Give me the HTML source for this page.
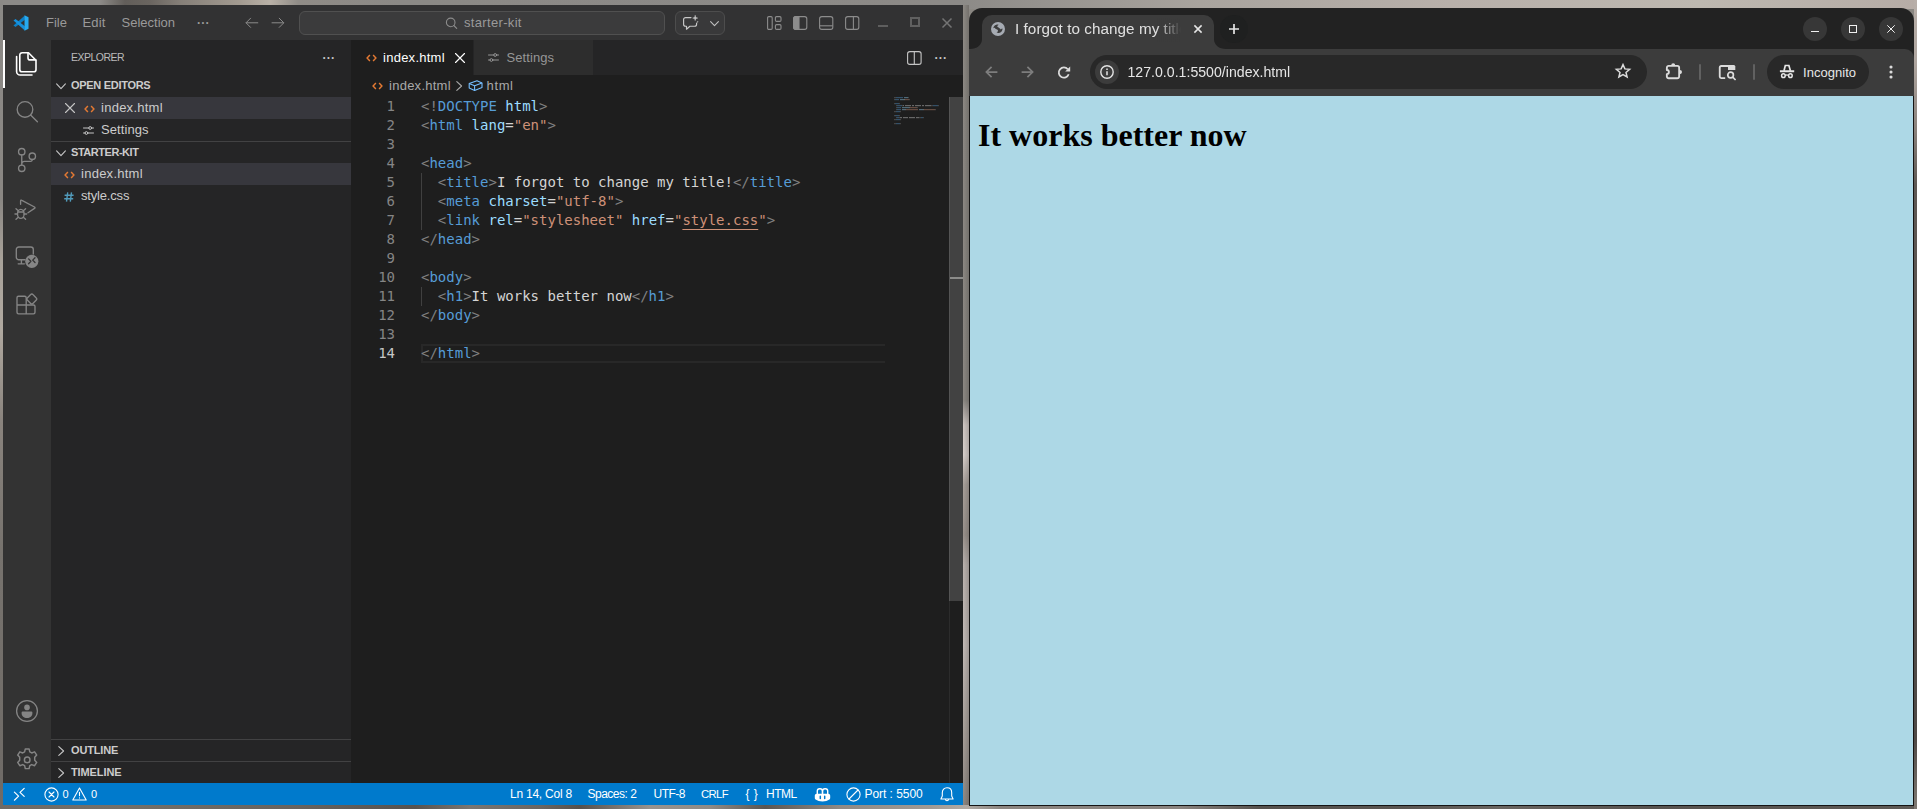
<!DOCTYPE html>
<html lang="en">
<head>
<meta charset="utf-8">
<title>Desktop</title>
<style>
*{box-sizing:border-box;margin:0;padding:0}
html,body{width:1917px;height:809px;overflow:hidden}
body{position:relative;font-family:"Liberation Sans",sans-serif;background:#8a8782;-webkit-font-smoothing:antialiased}
.abs{position:absolute}
.t{position:absolute;white-space:pre;line-height:1}
svg{position:absolute;overflow:visible}
/* wallpaper */
#wp-top{left:0;top:0;width:1917px;height:9px;background:linear-gradient(90deg,#8c8a87 0,#8c8a87 100px,#625e5a 125px,#6a6560 150px,#857f78 180px,#a39b91 240px,#b9b1a7 270px,#908c87 298px,#8b8986 400px,#8c8a87 960px,#a9a49e 1200px,#b8b0aa 1450px,#bdb8b0 1700px,#b6aca6 1917px)}
#wp-left{left:0;top:0;width:3px;height:809px;background:linear-gradient(180deg,#8b8986 0,#8a8783 200px,#a8a29a 260px,#b0a9a0 330px,#8a847e 420px,#77736e 550px,#6e6a66 809px)}
#wp-gap{left:963px;top:5px;width:6px;height:800px;background:linear-gradient(90deg,rgba(0,0,0,0),rgba(0,0,0,.18)),linear-gradient(180deg,#8d8984 0,#8b8782 395px,#cfc7c3 420px,#d8d0cc 450px,#a8a09a 480px,#9a928c 530px,#bab2ae 560px,#c2bab6 640px,#aaa29c 720px,#8c857f 809px)}
#wp-bot{left:0;top:805px;width:1917px;height:4px;background:linear-gradient(90deg,#6e6a66 0,#747069 120px,#67635f 300px,#57534f 415px,#7a7672 470px,#6a6662 540px,#55514d 580px,#98938e 650px,#908b86 710px,#5a5652 765px,#8f8a85 840px,#a09a94 930px,#b0aaa4 966px,#8c8681 1000px,#8a8480 1180px,#56524e 1260px,#5a5652 1400px,#6a6662 1500px,#585450 1650px,#5e5a56 1917px)}
#wp-right{left:1914px;top:0;width:3px;height:809px;background:linear-gradient(180deg,#b8afa9 0,#b0a7a1 60px,#8a827c 130px,#5e5854 185px,#544e4b 450px,#4e4946 740px,#7a756f 800px,#7d7872 809px)}

/* ===== VS Code ===== */
#vs{left:3px;top:5px;width:960px;height:800px;background:#1e1e1e;overflow:hidden;font-size:13px;color:#cccccc}
#vs .titlebar{left:0;top:0;width:960px;height:35px;background:#323233}
#vs .activity{left:0;top:35px;width:48px;height:743px;background:#333333}
#vs .sidebar{left:48px;top:35px;width:300px;height:743px;background:#252526}
#vs .editor{left:348px;top:35px;width:612px;height:743px;background:#1e1e1e}
#vs .status{left:0;top:778px;width:960px;height:22px;background:#007acc;color:#fff;font-size:12px}
.row-sel{position:absolute;left:0;width:300px;height:22px;background:#37373d}
.hdr{font-size:11px;font-weight:bold;color:#cccccc}
.code{font-family:"DejaVu Sans Mono","Liberation Mono",monospace;font-size:14px;line-height:19px;white-space:pre;position:absolute;color:#d4d4d4}
.ln{font-family:"DejaVu Sans Mono","Liberation Mono",monospace;font-size:14px;line-height:19px;position:absolute;color:#858585;text-align:right;width:40px}
.p{color:#808080}.k{color:#569cd6}.a{color:#9cdcfe}.s{color:#ce9178}

/* ===== Chrome ===== */
#ch{left:969px;top:8px;width:945px;height:798px;background:#222222;border-radius:13px 13px 0 0;overflow:hidden}
#ch .toolbar{left:0;top:41px;width:945px;height:47px;background:#3c3c3c;border-radius:0 9px 0 0}
#ch .page{left:1px;top:88px;width:943px;height:709px;background:#add8e6}
#ch .edge{left:0;top:88px;width:945px;height:710px;border:1px solid #141414;border-top:none}
</style>
</head>
<body>
<div id="wp-top" class="abs"></div>
<div id="wp-left" class="abs"></div>
<div id="wp-gap" class="abs"></div>
<div id="wp-bot" class="abs"></div>
<div id="wp-right" class="abs"></div>

<!-- ================= VS CODE ================= -->
<div id="vs" class="abs">
  <div class="titlebar abs" id="tb">
    <!-- logo -->
    <svg style="left:10px;top:10px" width="16" height="16" viewBox="0 0 100 100">
      <path d="M74 3L74 29L16 75L3 66Z" fill="#0c7fc6"/>
      <path d="M74 97L74 71L16 25L3 34Z" fill="#1690dc"/>
      <path d="M72 2L97 14V86L72 98Z" fill="#27aaf0"/>
    </svg>
    <span class="t" style="left:43px;top:11px;color:#9a9a9a">File</span>
    <span class="t" style="left:79.5px;top:11px;color:#9a9a9a;letter-spacing:.15px">Edit</span>
    <span class="t" style="left:118.5px;top:11px;color:#9a9a9a">Selection</span>
    <span class="t" style="left:194px;top:12px;color:#9a9a9a;font-weight:bold;letter-spacing:.2px;font-size:12px">···</span>
    <!-- nav arrows -->
    <svg style="left:242px;top:11px" width="14" height="14" viewBox="0 0 14 14" fill="none" stroke="#8a8a8a" stroke-width="1" stroke-linecap="round" stroke-linejoin="round"><path d="M12.800 6.800H1.200M5.600 2.200L1 6.800l4.600 4.600"/></svg>
    <svg style="left:268px;top:11px" width="14" height="14" viewBox="0 0 14 14" fill="none" stroke="#8a8a8a" stroke-width="1" stroke-linecap="round" stroke-linejoin="round"><path d="M1 6.800h11.600M8.200 2.200l4.600 4.600-4.600 4.600"/></svg>
    <!-- command center -->
    <div class="abs" style="left:296px;top:6px;width:366px;height:24px;background:#3b3b3c;border:1px solid #505050;border-radius:6px"></div>
    <svg style="left:442px;top:12px" width="12" height="12" viewBox="0 0 12 12" fill="none" stroke="#8c8c8c" stroke-width="1.1" stroke-linecap="round"><circle cx="5.700" cy="5.400" r="4.300"/><path d="M8.800 8.500l2.900 2.900"/></svg>
    <span class="t" style="left:461px;top:11px;color:#9a9a9a;letter-spacing:.33px">starter-kit</span>
    <!-- copilot button -->
    <div class="abs" style="left:672px;top:6px;width:50px;height:24px;background:#39393a;border:1px solid #4d4d4d;border-radius:6px"></div>
    <svg style="left:679px;top:10px" width="17" height="16" viewBox="0 0 17 16" fill="none" stroke="#c8c8c8" stroke-width="1.15" stroke-linecap="round" stroke-linejoin="round"><path d="M9 2.6H3.6a2 2 0 0 0-2 2v4.6a2 2 0 0 0 2 2h.9v3l3.4-3h4.7a2 2 0 0 0 2-2V8"/><path d="M13.2.6c.2 1.6.9 2.3 2.5 2.5-1.600.2-2.300.9-2.500 2.500-.2-1.600-.9-2.300-2.500-2.500 1.600-.2 2.300-.9 2.500-2.500z" fill="#c8c8c8" stroke-width=".5"/><path d="M15.700 5.800c.1.700.400 1 1.100 1.100-.7.100-1 .4-1.100 1.100-.1-.7-.4-1-1.100-1.100.7-.1 1-.4 1.100-1.100z" fill="#c8c8c8" stroke="none"/></svg>
    <svg style="left:707px;top:16px" width="9" height="6" viewBox="0 0 9 6" fill="none" stroke="#c0c0c0" stroke-width="1.100" stroke-linecap="round" stroke-linejoin="round"><path d="M.6.600l3.900 4 3.900-4"/></svg>
    <!-- layout icons -->
    <svg style="left:764px;top:11px" width="15" height="14" viewBox="0 0 15 14" fill="none" stroke="#8c8c8c" stroke-width="1.1"><rect x=".6" y=".6" width="4.600" height="12.800" rx="1.200"/><rect x="8.400" y=".6" width="5.600" height="4.800" rx="1.200"/><rect x="8.400" y="8.600" width="5.600" height="4.800" rx="1.200"/></svg>
    <svg style="left:789.500px;top:11px" width="15" height="14" viewBox="0 0 15 14" fill="none" stroke="#8c8c8c" stroke-width="1.1"><rect x=".6" y=".6" width="13.200" height="12.800" rx="2.200"/><path d="M.6 2.800a2.200 2.200 0 0 1 2.200-2.200H6v12.800H2.800a2.200 2.200 0 0 1-2.200-2.200z" fill="#8c8c8c"/></svg>
    <svg style="left:815.500px;top:11px" width="15" height="14" viewBox="0 0 15 14" fill="none" stroke="#8c8c8c" stroke-width="1.1"><rect x=".6" y=".6" width="13.200" height="12.800" rx="2.200"/><path d="M.6 9.800h13.200"/></svg>
    <svg style="left:841.500px;top:11px" width="15" height="14" viewBox="0 0 15 14" fill="none" stroke="#8c8c8c" stroke-width="1.1"><rect x=".6" y=".6" width="13.200" height="12.800" rx="2.200"/><path d="M8.400.6v12.800"/></svg>
    <!-- window controls -->
    <div class="abs" style="left:874.500px;top:20px;width:10px;height:2px;background:#5e5e5e"></div>
    <div class="abs" style="left:906.500px;top:12px;width:10px;height:10px;border:2px solid #606060"></div>
    <svg style="left:938.500px;top:12.500px" width="10" height="10" viewBox="0 0 10 10" fill="none" stroke="#747474" stroke-width="1.500"><path d="M.5.5l9 9M9.500.5l-9 9"/></svg>
  </div>
  <div class="activity abs" id="ab">
    <div class="abs" style="left:0;top:0;width:2px;height:48px;background:#ffffff"></div>
    <!-- explorer (files) : abs x15.8-36.8, y51.9-75.8 => rel-to-activity x12.8-33.8, y11.9-35.8 -->
    <svg style="left:12px;top:11px" width="24" height="26" viewBox="0 0 24 26" fill="none" stroke="#ffffff" stroke-width="1.600" stroke-linejoin="round" stroke-linecap="round">
      <path d="M7.200 1.700h6.300l7.500 7.500v9.200a2.400 2.400 0 0 1-2.400 2.400H7.200a2.400 2.400 0 0 1-2.400-2.400V4.100a2.400 2.400 0 0 1 2.400-2.400z"/>
      <path d="M13 2v4.900a2 2 0 0 0 2 2h5.700"/>
      <path d="M1.600 5.500v14.900a3.600 3.600 0 0 0 3.600 3.600H17"/>
    </svg>
    <!-- search centre (25,109.4) abs => rel (22, 69.4) -->
    <svg style="left:12px;top:59px" width="24" height="24" viewBox="0 0 24 24" fill="none" stroke="#858585" stroke-width="1.350" stroke-linecap="round"><circle cx="10" cy="10.400" r="7.800"/><path d="M15.600 16l6.800 6.800"/></svg>
    <!-- source control centre y abs 159.4 => rel 119.4 -->
    <svg style="left:12px;top:107px" width="24" height="28" viewBox="0 0 24 28" fill="none" stroke="#858585" stroke-width="1.350" stroke-linecap="round"><circle cx="6.750" cy="4.700" r="3.200"/><circle cx="6.750" cy="21.300" r="3.200"/><circle cx="17.300" cy="9.200" r="3.200"/><path d="M6.750 7.900V18.100M17.300 12.400v.3a1.600 1.600 0 0 1-1.600 1.600H9.400a2.600 2.600 0 0 0-2.600 2.600"/></svg>
    <!-- run and debug centre abs 208.7 => rel 168.7 -->
    <svg style="left:12px;top:156px" width="26" height="26" viewBox="0 0 26 26" fill="none" stroke="#858585" stroke-width="1.350" stroke-linecap="round" stroke-linejoin="round"><path d="M5.600 8.200V5c0-.8.600-1.100 1.300-.7l12.600 6.700c.7.400.7 1 0 1.400L13 16.800"/><ellipse cx="5.800" cy="17.900" rx="3.300" ry="4.500"/><path d="M3 14.600L1 12.800M8.600 14.600l2-1.800M2.500 18H0M9.100 18h2.500M3 21.400l-2 1.800M8.600 21.400l2 1.800M2.900 16h5.800"/></svg>
    <!-- remote explorer centre abs 257 => rel 217 -->
    <svg style="left:11px;top:204px" width="28" height="28" viewBox="0 0 28 28" fill="none" stroke="#858585" stroke-width="1.350" stroke-linecap="round" stroke-linejoin="round"><path d="M11 15.700H4.800a2.500 2.500 0 0 1-2.500-2.500V5.500A2.500 2.500 0 0 1 4.800 3h12a2.500 2.500 0 0 1 2.500 2.500V10"/><path d="M4.200 19.800h6.200M7.400 15.900v3.700"/><circle cx="17.800" cy="17.300" r="6.600" fill="#858585" stroke="none"/><path d="M14.600 14.900l2.300 2.400-2.300 2.400M21 13.700l-2.300 2.400 2.300 2.400" stroke="#333333" stroke-width="1.300"/></svg>
    <!-- extensions centre abs 304 => rel 264 -->
    <svg style="left:12px;top:252px" width="25" height="24" viewBox="0 0 25 24" fill="none" stroke="#858585" stroke-width="1.350" stroke-linejoin="round"><path d="M11.200 13V5.700a1.500 1.500 0 0 0-1.500-1.500H3.500A1.500 1.500 0 0 0 2 5.700v14.600a1.500 1.500 0 0 0 1.500 1.500h15a1.500 1.500 0 0 0 1.500-1.500v-5.800a1.500 1.500 0 0 0-1.500-1.500H2M11.200 13v8.800"/><path d="M15.700 2.500a1.500 1.500 0 0 1 2.200 0l3.400 3.400a1.500 1.500 0 0 1 0 2.200l-3.400 3.400a1.500 1.500 0 0 1-2.200 0l-3.400-3.400a1.500 1.500 0 0 1 0-2.200z"/></svg>
    <!-- account centre abs (27.1,711) => rel (24.1,671) -->
    <svg style="left:12px;top:659px" width="24" height="24" viewBox="0 0 24 24" fill="none" stroke="#858585" stroke-width="1.300"><circle cx="12" cy="12" r="10.400"/><circle cx="12" cy="8.400" r="2.800" fill="#858585" stroke="none"/><path d="M7.600 12.600h8.800a1 1 0 0 1 1 1v.6c0 2.900-2.400 4.800-5.400 4.800s-5.400-1.900-5.400-4.800v-.6a1 1 0 0 1 1-1z" fill="#858585" stroke="none"/></svg>
    <!-- gear centre abs (27,758.9) => rel (24,718.9) -->
    <svg style="left:12px;top:707px" width="24" height="26" viewBox="0 0 24 26" fill="none" stroke="#858585" stroke-width="1.300" stroke-linejoin="round"><g transform="translate(12.200 12.900) scale(1.120) translate(-12 -12)"><circle cx="12" cy="12" r="2.500"/><path d="M10.300 2.200h3.400l.6 2.700 1.700.9 2.600-1 1.900 2.900-1.800 2v2.600l1.800 2-1.900 2.900-2.600-1-1.700.9-.6 2.700h-3.400l-.6-2.700-1.700-.9-2.600 1-1.900-2.900 1.800-2v-2.600l-1.800-2 1.900-2.900 2.600 1 1.700-.9z"/></g></svg>
  </div>
  <div class="sidebar abs" id="sb">
    <span class="t" style="left:20px;top:12px;font-size:10.500px;color:#bbbbbb;letter-spacing:-.52px">EXPLORER</span>
    <span class="t" style="left:271.500px;top:11.500px;color:#c5c5c5;font-weight:bold;letter-spacing:.2px;font-size:12px">···</span>
    <!-- OPEN EDITORS -->
    <svg style="left:5px;top:43px" width="10" height="7" viewBox="0 0 10 7" fill="none" stroke="#c5c5c5" stroke-width="1.100" stroke-linecap="round" stroke-linejoin="round"><path d="M.6.800L5 5.600 9.400.8"/></svg>
    <span class="t hdr" style="left:20px;top:39.500px;letter-spacing:-.3px">OPEN EDITORS</span>
    <div class="row-sel" style="top:57px"></div>
    <svg style="left:13.500px;top:63px" width="10" height="10" viewBox="0 0 10 10" fill="none" stroke="#c5c5c5" stroke-width="1.100" stroke-linecap="round"><path d="M.5.500l9 9M9.500.5l-9 9"/></svg>
    <svg style="left:32.500px;top:64.500px" width="11" height="8" viewBox="0 0 11 8" fill="none" stroke="#e37933" stroke-width="1.450"><path d="M3.900 1.100L1.100 4l2.800 2.900M7.100 1.100L9.900 4 7.100 6.900"/></svg>
    <span class="t" style="left:50px;top:61px;color:#cccccc;letter-spacing:.26px">index.html</span>
    <svg style="left:32px;top:86px" width="11" height="9" viewBox="0 0 11 9" fill="none" stroke="#c5c5c5" stroke-width="1" stroke-linecap="round"><path d="M.5 2h5.300M8.700 2h1.800M.5 7H2M4.900 7h5.600"/><circle cx="7.200" cy="2" r="1.400"/><circle cx="3.400" cy="7" r="1.400"/></svg>
    <span class="t" style="left:50px;top:83px;color:#cccccc;letter-spacing:.09px">Settings</span>
    <!-- STARTER-KIT -->
    <div class="abs" style="left:0;top:101px;width:300px;height:1px;background:#424243"></div>
    <svg style="left:5px;top:110px" width="10" height="7" viewBox="0 0 10 7" fill="none" stroke="#c5c5c5" stroke-width="1.100" stroke-linecap="round" stroke-linejoin="round"><path d="M.6.800L5 5.600 9.400.8"/></svg>
    <span class="t hdr" style="left:20px;top:106.500px;letter-spacing:-.46px">STARTER-KIT</span>
    <div class="row-sel" style="top:123px"></div>
    <svg style="left:12.500px;top:130.500px" width="11" height="8" viewBox="0 0 11 8" fill="none" stroke="#e37933" stroke-width="1.450"><path d="M3.900 1.100L1.100 4l2.800 2.900M7.100 1.100L9.900 4 7.100 6.900"/></svg>
    <span class="t" style="left:30px;top:127px;color:#cccccc;letter-spacing:.26px">index.html</span>
    <svg style="left:13px;top:151.500px" width="10" height="10" viewBox="0 0 10 10" fill="none" stroke="#519aba" stroke-width="1.400"><path d="M3.700.3L2.500 9.700M7.500.3L6.300 9.700M.6 3.300h9M.2 6.700h9"/></svg>
    <span class="t" style="left:30px;top:149px;color:#cccccc;letter-spacing:-.18px">style.css</span>
    <!-- OUTLINE / TIMELINE -->
    <div class="abs" style="left:0;top:699px;width:300px;height:1px;background:#424243"></div>
    <svg style="left:7px;top:706px" width="7" height="10" viewBox="0 0 7 10" fill="none" stroke="#c5c5c5" stroke-width="1.100" stroke-linecap="round" stroke-linejoin="round"><path d="M.8.600L5.600 5 .8 9.400"/></svg>
    <span class="t hdr" style="left:20px;top:704.500px;letter-spacing:-.17px">OUTLINE</span>
    <div class="abs" style="left:0;top:721px;width:300px;height:1px;background:#424243"></div>
    <svg style="left:7px;top:728px" width="7" height="10" viewBox="0 0 7 10" fill="none" stroke="#c5c5c5" stroke-width="1.100" stroke-linecap="round" stroke-linejoin="round"><path d="M.8.600L5.600 5 .8 9.400"/></svg>
    <span class="t hdr" style="left:20px;top:726.500px;letter-spacing:-.11px">TIMELINE</span>
  </div>
  <div class="editor abs" id="ed">
    <div class="abs" style="left:0;top:0;width:612px;height:35px;background:#252526"></div>
    <div class="abs" style="left:0;top:0;width:122px;height:35px;background:#1e1e1e"></div>
    <div class="abs" style="left:123px;top:0;width:119px;height:35px;background:#2d2d2d"></div>
    <svg style="left:15px;top:14px" width="11" height="8" viewBox="0 0 11 8" fill="none" stroke="#e37933" stroke-width="1.450"><path d="M3.900 1.100L1.100 4l2.800 2.900M7.100 1.100L9.900 4 7.100 6.900"/></svg>
    <span class="t" style="left:32px;top:11px;color:#ffffff;letter-spacing:.26px">index.html</span>
    <svg style="left:103.500px;top:13px" width="10" height="10" viewBox="0 0 10 10" fill="none" stroke="#ffffff" stroke-width="1.150" stroke-linecap="round"><path d="M.5.500l9 9M9.500.5l-9 9"/></svg>
    <svg style="left:137px;top:13px" width="11" height="9" viewBox="0 0 11 9" fill="none" stroke="#969696" stroke-width="1" stroke-linecap="round"><path d="M.5 2h5.300M8.700 2h1.800M.5 7H2M4.900 7h5.600"/><circle cx="7.200" cy="2" r="1.400"/><circle cx="3.400" cy="7" r="1.400"/></svg>
    <span class="t" style="left:155.500px;top:11px;color:#969696;letter-spacing:.09px">Settings</span>
    <svg style="left:556px;top:10.500px" width="15" height="14" viewBox="0 0 15 14" fill="none" stroke="#c5c5c5" stroke-width="1.100"><rect x=".6" y=".6" width="13.500" height="12.800" rx="2.200"/><path d="M7.300.6v12.800"/></svg>
    <span class="t" style="left:583.500px;top:12px;color:#c5c5c5;font-weight:bold;letter-spacing:.2px;font-size:12px">···</span>
    <svg style="left:21px;top:42px" width="11" height="8" viewBox="0 0 11 8" fill="none" stroke="#e37933" stroke-width="1.450"><path d="M3.900 1.100L1.100 4l2.800 2.900M7.100 1.100L9.900 4 7.100 6.900"/></svg>
    <span class="t" style="left:38px;top:38.500px;color:#a9a9a9;letter-spacing:.26px">index.html</span>
    <svg style="left:105px;top:41px" width="7" height="10" viewBox="0 0 7 10" fill="none" stroke="#a9a9a9" stroke-width="1.100" stroke-linecap="round" stroke-linejoin="round"><path d="M.8.600L5.600 5 .8 9.400"/></svg>
    <svg style="left:116.500px;top:40px" width="15" height="11" viewBox="0 0 15 11" fill="none" stroke="#75beff" stroke-width="1.100" stroke-linejoin="round"><path d="M1.200 3.600L9 .8l5 2.200v4.600L6.600 10.400 1.200 8z"/><path d="M1.200 3.600l5.400 2.200L14 3M6.600 5.800v4.600"/></svg>
    <span class="t" style="left:135.500px;top:38.500px;color:#a9a9a9;letter-spacing:.65px">html</span>
    <div class="abs" style="left:70px;top:304px;width:464px;height:19px;border:2px solid #282828;border-right:none"></div>
    <div class="abs" style="left:70px;top:133px;width:1px;height:57px;background:#404040"></div>
    <div class="abs" style="left:70px;top:247px;width:1px;height:19px;background:#404040"></div>
    <div class="ln" style="left:4px;top:57px;color:#858585">1</div>
    <div class="code" style="left:70px;top:57px"><span class="p">&lt;!</span><span class="k">DOCTYPE</span> <span class="a">html</span><span class="p">&gt;</span></div>
    <div class="ln" style="left:4px;top:76px;color:#858585">2</div>
    <div class="code" style="left:70px;top:76px"><span class="p">&lt;</span><span class="k">html</span> <span class="a">lang</span>=<span class="s">"en"</span><span class="p">&gt;</span></div>
    <div class="ln" style="left:4px;top:95px;color:#858585">3</div>
    <div class="ln" style="left:4px;top:114px;color:#858585">4</div>
    <div class="code" style="left:70px;top:114px"><span class="p">&lt;</span><span class="k">head</span><span class="p">&gt;</span></div>
    <div class="ln" style="left:4px;top:133px;color:#858585">5</div>
    <div class="code" style="left:70px;top:133px">  <span class="p">&lt;</span><span class="k">title</span><span class="p">&gt;</span>I forgot to change my title!<span class="p">&lt;/</span><span class="k">title</span><span class="p">&gt;</span></div>
    <div class="ln" style="left:4px;top:152px;color:#858585">6</div>
    <div class="code" style="left:70px;top:152px">  <span class="p">&lt;</span><span class="k">meta</span> <span class="a">charset</span>=<span class="s">"utf-8"</span><span class="p">&gt;</span></div>
    <div class="ln" style="left:4px;top:171px;color:#858585">7</div>
    <div class="code" style="left:70px;top:171px">  <span class="p">&lt;</span><span class="k">link</span> <span class="a">rel</span>=<span class="s">"stylesheet"</span> <span class="a">href</span>=<span class="s">"</span><span class="s" style="text-decoration:underline;text-underline-offset:4px">style.css</span><span class="s">"</span><span class="p">&gt;</span></div>
    <div class="ln" style="left:4px;top:190px;color:#858585">8</div>
    <div class="code" style="left:70px;top:190px"><span class="p">&lt;/</span><span class="k">head</span><span class="p">&gt;</span></div>
    <div class="ln" style="left:4px;top:209px;color:#858585">9</div>
    <div class="ln" style="left:4px;top:228px;color:#858585">10</div>
    <div class="code" style="left:70px;top:228px"><span class="p">&lt;</span><span class="k">body</span><span class="p">&gt;</span></div>
    <div class="ln" style="left:4px;top:247px;color:#858585">11</div>
    <div class="code" style="left:70px;top:247px">  <span class="p">&lt;</span><span class="k">h1</span><span class="p">&gt;</span>It works better now<span class="p">&lt;/</span><span class="k">h1</span><span class="p">&gt;</span></div>
    <div class="ln" style="left:4px;top:266px;color:#858585">12</div>
    <div class="code" style="left:70px;top:266px"><span class="p">&lt;/</span><span class="k">body</span><span class="p">&gt;</span></div>
    <div class="ln" style="left:4px;top:285px;color:#858585">13</div>
    <div class="ln" style="left:4px;top:304px;color:#c6c6c6">14</div>
    <div class="code" style="left:70px;top:304px"><span class="p">&lt;/</span><span class="k">html</span><span class="p">&gt;</span></div>
    <svg style="left:543px;top:57px" width="50" height="30" viewBox="0 0 50 30" opacity=".4"><rect x="0" y="0" width="2" height="1.200" fill="#808080"/><rect x="2" y="0" width="7" height="1.200" fill="#569cd6"/><rect x="10" y="0" width="4" height="1.200" fill="#9cdcfe"/><rect x="14" y="0" width="1" height="1.200" fill="#808080"/><rect x="0" y="2" width="1" height="1.200" fill="#808080"/><rect x="1" y="2" width="4" height="1.200" fill="#569cd6"/><rect x="6" y="2" width="4" height="1.200" fill="#9cdcfe"/><rect x="10" y="2" width="1" height="1.200" fill="#d4d4d4"/><rect x="11" y="2" width="4" height="1.200" fill="#ce9178"/><rect x="15" y="2" width="1" height="1.200" fill="#808080"/><rect x="0" y="6" width="1" height="1.200" fill="#808080"/><rect x="1" y="6" width="4" height="1.200" fill="#569cd6"/><rect x="5" y="6" width="1" height="1.200" fill="#808080"/><rect x="2" y="8" width="1" height="1.200" fill="#808080"/><rect x="3" y="8" width="5" height="1.200" fill="#569cd6"/><rect x="8" y="8" width="1" height="1.200" fill="#808080"/><rect x="9" y="8" width="1" height="1.200" fill="#d4d4d4"/><rect x="11" y="8" width="6" height="1.200" fill="#d4d4d4"/><rect x="18" y="8" width="2" height="1.200" fill="#d4d4d4"/><rect x="21" y="8" width="6" height="1.200" fill="#d4d4d4"/><rect x="28" y="8" width="2" height="1.200" fill="#d4d4d4"/><rect x="31" y="8" width="6" height="1.200" fill="#d4d4d4"/><rect x="37" y="8" width="2" height="1.200" fill="#808080"/><rect x="39" y="8" width="5" height="1.200" fill="#569cd6"/><rect x="44" y="8" width="1" height="1.200" fill="#808080"/><rect x="2" y="10" width="1" height="1.200" fill="#808080"/><rect x="3" y="10" width="4" height="1.200" fill="#569cd6"/><rect x="8" y="10" width="7" height="1.200" fill="#9cdcfe"/><rect x="15" y="10" width="1" height="1.200" fill="#d4d4d4"/><rect x="16" y="10" width="7" height="1.200" fill="#ce9178"/><rect x="23" y="10" width="1" height="1.200" fill="#808080"/><rect x="2" y="12" width="1" height="1.200" fill="#808080"/><rect x="3" y="12" width="4" height="1.200" fill="#569cd6"/><rect x="8" y="12" width="3" height="1.200" fill="#9cdcfe"/><rect x="11" y="12" width="1" height="1.200" fill="#d4d4d4"/><rect x="12" y="12" width="12" height="1.200" fill="#ce9178"/><rect x="25" y="12" width="4" height="1.200" fill="#9cdcfe"/><rect x="29" y="12" width="1" height="1.200" fill="#d4d4d4"/><rect x="30" y="12" width="1" height="1.200" fill="#ce9178"/><rect x="31" y="12" width="9" height="1.200" fill="#ce9178"/><rect x="40" y="12" width="1" height="1.200" fill="#ce9178"/><rect x="41" y="12" width="1" height="1.200" fill="#808080"/><rect x="0" y="14" width="2" height="1.200" fill="#808080"/><rect x="2" y="14" width="4" height="1.200" fill="#569cd6"/><rect x="6" y="14" width="1" height="1.200" fill="#808080"/><rect x="0" y="18" width="1" height="1.200" fill="#808080"/><rect x="1" y="18" width="4" height="1.200" fill="#569cd6"/><rect x="5" y="18" width="1" height="1.200" fill="#808080"/><rect x="2" y="20" width="1" height="1.200" fill="#808080"/><rect x="3" y="20" width="2" height="1.200" fill="#569cd6"/><rect x="5" y="20" width="1" height="1.200" fill="#808080"/><rect x="6" y="20" width="2" height="1.200" fill="#d4d4d4"/><rect x="9" y="20" width="5" height="1.200" fill="#d4d4d4"/><rect x="15" y="20" width="6" height="1.200" fill="#d4d4d4"/><rect x="22" y="20" width="3" height="1.200" fill="#d4d4d4"/><rect x="25" y="20" width="2" height="1.200" fill="#808080"/><rect x="27" y="20" width="2" height="1.200" fill="#569cd6"/><rect x="29" y="20" width="1" height="1.200" fill="#808080"/><rect x="0" y="22" width="2" height="1.200" fill="#808080"/><rect x="2" y="22" width="4" height="1.200" fill="#569cd6"/><rect x="6" y="22" width="1" height="1.200" fill="#808080"/><rect x="0" y="26" width="2" height="1.200" fill="#808080"/><rect x="2" y="26" width="4" height="1.200" fill="#569cd6"/><rect x="6" y="26" width="1" height="1.200" fill="#808080"/></svg>
    <div class="abs" style="left:598px;top:57px;width:1px;height:686px;background:#2c2c2c"></div>
    <div class="abs" style="left:598px;top:57px;width:14px;height:504px;background:rgba(121,121,121,.4)"></div>
    <div class="abs" style="left:598px;top:57px;width:1px;height:504px;background:rgba(255,255,255,.06)"></div>
    <div class="abs" style="left:599px;top:237px;width:13px;height:2px;background:#8c8c8a"></div>
  </div>
  <div class="status abs" id="st">
    <svg style="left:10px;top:5px" width="12" height="13" viewBox="0 0 12 13" fill="none" stroke="#ffffff" stroke-width="1.200" stroke-linecap="round" stroke-linejoin="round"><path d="M1.400 4.100L5.600 8.100 1.400 12.200M11.200.4L7 4.400l4.200 4"/></svg>
    <svg style="left:40.500px;top:3.500px" width="15" height="15" viewBox="0 0 15 15" fill="none" stroke="#ffffff" stroke-width="1.100" stroke-linecap="round"><circle cx="7.500" cy="7.500" r="6.600"/><path d="M5 5l5 5M10 5l-5 5"/></svg>
    <span class="t" style="left:59.500px;top:5.500px;font-size:11px">0</span>
    <svg style="left:69px;top:4px" width="15" height="14" viewBox="0 0 15 14" fill="none" stroke="#ffffff" stroke-width="1.100" stroke-linecap="round" stroke-linejoin="round"><path d="M7.500 1L14.200 13H.8z"/><path d="M7.500 5.400v3.400M7.500 10.800v.2"/></svg>
    <span class="t" style="left:88px;top:5.500px;font-size:11px">0</span>
    <span class="t" style="left:507px;top:5px;letter-spacing:-.24px">Ln 14, Col 8</span>
    <span class="t" style="left:584.500px;top:5px;letter-spacing:-.5px">Spaces: 2</span>
    <span class="t" style="left:650.500px;top:5px;letter-spacing:-.54px">UTF-8</span>
    <span class="t" style="left:698px;top:5.500px;font-size:11.300px;letter-spacing:-.62px">CRLF</span>
    <span class="t" style="left:742.500px;top:4.500px;letter-spacing:.5px">{ }</span>
    <span class="t" style="left:763px;top:5px;letter-spacing:-.47px">HTML</span>
    <svg style="left:810.500px;top:3.500px" width="17" height="16" viewBox="0 0 17 16" fill="none" stroke="#ffffff" stroke-width="1.400" stroke-linejoin="round"><path d="M3.300 7V4.100a2.300 2.300 0 0 1 2.300-2.300h.5a2.300 2.300 0 0 1 2.300 2.300V7M8.600 7V4.100a2.300 2.300 0 0 1 2.300-2.300h.5a2.300 2.300 0 0 1 2.300 2.300V7"/><path d="M.8 8.600c0-1.100.8-1.900 1.900-1.900h11.600c1.100 0 1.900.8 1.900 1.900v2.300c0 .7-.3 1.200-.8 1.600-1.800 1.300-4.100 2-6.900 2s-5.100-.7-6.900-2c-.5-.4-.8-.9-.8-1.600z" fill="#ffffff" stroke="none"/><path d="M6.300 9.200v2.400M10.700 9.200v2.400" stroke="#007acc" stroke-width="1.500" stroke-linecap="round"/></svg>
    <svg style="left:843px;top:3.500px" width="15" height="15" viewBox="0 0 15 15" fill="none" stroke="#ffffff" stroke-width="1.100" stroke-linecap="round"><circle cx="7.500" cy="7.500" r="6.600"/><path d="M3 12L12 3"/></svg>
    <span class="t" style="left:861.500px;top:5px;letter-spacing:-.05px">Port : 5500</span>
    <svg style="left:937px;top:3.500px" width="14" height="15" viewBox="0 0 14 15" fill="none" stroke="#ffffff" stroke-width="1.100" stroke-linejoin="round"><path d="M7 .8c2.800 0 4.700 2.100 4.700 4.900v3.400l1.400 2.900H.9l1.400-2.900V5.700C2.300 2.900 4.200.8 7 .8z"/><path d="M5.300 12.200c.2 1 .8 1.500 1.700 1.500s1.500-.5 1.700-1.500"/></svg>
  </div>
</div>

<!-- ================= CHROME ================= -->
<div id="ch" class="abs">
  <div class="abs" id="tabstrip" style="left:0;top:0;width:945px;height:41px">
    <!-- active tab shape -->
    <svg style="left:0;top:0" width="270" height="41" viewBox="0 0 270 41"><path d="M1 41C8 41 13 37 13 31V17A10 10 0 0 1 23 7H235a10 10 0 0 1 10 10v14c0 6 5 10 12 10z" fill="#3c3c3c"/></svg>
    <!-- favicon globe -->
    <svg style="left:22px;top:14px" width="14" height="14" viewBox="0 0 14 14"><circle cx="7" cy="7" r="7" fill="#a6abb3"/><path d="M5.300 2.800c.9-.5 1.900-.4 2.300.1-.9.300-1.500.9-1.300 1.700.2.800 1.200.9 1.900 1.300.8.400 1.200 1 1.600 1.700.5-.5 1-.9 1.700-1 .1.900-.3 2-.9 2.800-.7.900-1.700 1.400-2.700 1.500-.9.100-1.800-.2-2.300-.7.700-.2 1.400-.6 1.400-1.400 0-.8-.8-1.100-1.500-1.500-.8-.4-1.400-.9-1.800-1.600-.4-.1-.9.200-1.300.6-.1-1.300.900-2.900 2.900-3.500z" fill="#3c3c3c"/></svg>
    <div class="abs" style="left:45px;top:10px;width:169px;height:24px;overflow:hidden">
      <span class="t" style="left:.5px;top:3.200px;font-size:15.250px;color:#e0e0e0;letter-spacing:.05px;will-change:transform">I forgot to change my title!</span>
      <div class="abs" style="left:143px;top:0;width:26px;height:24px;background:linear-gradient(90deg,rgba(60,60,60,0),#3c3c3c 92%)"></div>
    </div>
    <svg style="left:225px;top:17px" width="8" height="8" viewBox="0 0 8 8" fill="none" stroke="#e6e6e6" stroke-width="1.500"><path d="M.4.400l7.200 7.200M7.600.4L.4 7.600"/></svg>
    <!-- new tab -->
    <div class="abs" style="left:251px;top:7px;width:28px;height:28px;border-radius:14px;background:#1f2020"></div>
    <svg style="left:260px;top:15.500px" width="10" height="10" viewBox="0 0 10 10" fill="none" stroke="#e6e6e6" stroke-width="1.700"><path d="M5 0v10M0 5h10"/></svg>
    <!-- window buttons -->
    <div class="abs" style="left:834px;top:9px;width:24px;height:24px;border-radius:12px;background:#373737"></div>
    <div class="abs" style="left:872px;top:9px;width:24px;height:24px;border-radius:12px;background:#373737"></div>
    <div class="abs" style="left:910px;top:9px;width:24px;height:24px;border-radius:12px;background:#373737"></div>
    <div class="abs" style="left:842px;top:23px;width:8px;height:1px;background:#f0f0f0"></div>
    <div class="abs" style="left:880px;top:17px;width:8px;height:8px;border:1px solid #f0f0f0"></div>
    <svg style="left:918px;top:17px" width="8" height="8" viewBox="0 0 8 8" fill="none" stroke="#f0f0f0" stroke-width="1"><path d="M.3.300l7.400 7.400M7.700.3L.3 7.700"/></svg>
  </div>
  <div class="toolbar abs" id="tool">
    <!-- toolbar coords relative to toolbar: abs y-49, abs x-969 -->
    <svg style="left:16.200px;top:17px" width="13" height="12" viewBox="0 0 13 12" fill="none" stroke="#7d7d7d" stroke-width="1.750" stroke-linejoin="miter"><path d="M12.400 6H1.600M6.600 .8L1.400 6l5.200 5.200"/></svg>
    <svg style="left:51.800px;top:17px" width="13" height="12" viewBox="0 0 13 12" fill="none" stroke="#7d7d7d" stroke-width="1.750"><path d="M.6 6h10.800M6.400.8L11.600 6l-5.200 5.200"/></svg>
    <svg style="left:88px;top:16.500px" width="14" height="13" viewBox="0 0 14 13" fill="none" stroke="#dcdcdc" stroke-width="1.750"><path d="M11.700 8.300A5.100 5.100 0 1 1 10.800 3.300"/><path d="M13.200.4V5.400H8.200z" fill="#dcdcdc" stroke="none"/></svg>
    <!-- omnibox -->
    <div class="abs" style="left:121px;top:6px;width:557px;height:34px;border-radius:17px;background:#282828"></div>
    <div class="abs" style="left:125.500px;top:11px;width:24px;height:24px;border-radius:12px;background:#3c3c3c"></div>
    <svg style="left:130.500px;top:16px" width="14" height="14" viewBox="0 0 14 14" fill="none" stroke="#e3e3e3" stroke-width="1.400"><circle cx="7" cy="7" r="6.200"/><path d="M7 6.200v4M7 3.600v1.500" stroke-width="1.500"/></svg>
    <span class="t" style="left:158.500px;top:16px;font-size:14.100px;color:#e6e6e6;letter-spacing:.02px">127.0.0.1:5500/index.html</span>
    <svg style="left:646px;top:14.300px" width="16" height="15" viewBox="0 0 16 15" fill="none" stroke="#dcdcdc" stroke-width="1.500" stroke-linejoin="miter"><path d="M8 1.600l1.900 4.300 4.700.4-3.600 3.100 1.100 4.600L8 11.600 3.900 14 5 9.400 1.400 6.300l4.700-.4z"/></svg>
    <!-- extensions -->
    <svg style="left:696px;top:13px" width="18" height="18" viewBox="0 0 18 18" fill="none" stroke="#dcdcdc" stroke-width="1.850" stroke-linejoin="round"><path d="M3.650 3.850H12.350a1.800 1.800 0 0 1 1.800 1.800V14.450a1.800 1.800 0 0 1-1.800 1.800H3.650a1.800 1.800 0 0 1-1.800-1.800V12.100a2.050 2.050 0 0 0 0-4.100V5.650a1.800 1.800 0 0 1 1.800-1.800z"/><path d="M6.200 3.200a2 2 0 0 1 4 0zM14.900 8a2.100 2.100 0 0 1 0 4.200z" fill="#dcdcdc" stroke="none"/></svg>
    <div class="abs" style="left:730px;top:15px;width:2px;height:16px;background:#616161;border-radius:1px"></div>
    <!-- tab search / media -->
    <svg style="left:749px;top:15px" width="19" height="17" viewBox="0 0 19 17" fill="none" stroke="#dcdcdc" stroke-width="1.850"><path d="M7.200 14.050H3.200a1.450 1.450 0 0 1-1.450-1.450V3.400a1.450 1.450 0 0 1 1.450-1.450H10.500"/><path d="M10 1h5.800a1.500 1.500 0 0 1 1.500 1.500V6H10z" fill="#dcdcdc" stroke="none"/><circle cx="12.600" cy="11" r="2.800" stroke-width="1.700"/><path d="M14.700 13.100l2.900 2.900" stroke-width="1.700"/></svg>
    <div class="abs" style="left:784.300px;top:15px;width:2px;height:16px;background:#616161;border-radius:1px"></div>
    <!-- incognito chip -->
    <div class="abs" style="left:798px;top:6px;width:102px;height:34px;border-radius:17px;background:#282828"></div>
    <svg style="left:810px;top:14px" width="17" height="16" viewBox="0 0 17 16" fill="none" stroke="#e6e6e6" stroke-width="1.700"><path d="M.9 8.200h14.300" stroke-width="1.850"/><path d="M5 7.800L6.300 2.500h3.600l1.500 5.300" stroke-linejoin="miter"/><circle cx="4.400" cy="12.650" r="1.800" stroke-width="1.500"/><circle cx="11.400" cy="12.650" r="1.800" stroke-width="1.500"/><path d="M6.200 12.300Q7.900 11.500 9.600 12.300" stroke-width="1.300"/></svg>
    <span class="t" style="left:834px;top:17px;font-size:13px;color:#e6e6e6;letter-spacing:.03px">Incognito</span>
    <!-- menu -->
    <svg style="left:920px;top:15px" width="4" height="16" viewBox="0 0 4 16" fill="#dcdcdc"><circle cx="2" cy="3" r="1.550"/><circle cx="2" cy="8" r="1.550"/><circle cx="2" cy="13" r="1.550"/></svg>
  </div>
  <div class="page abs" id="pg"><h1 style="font-family:'Liberation Serif',serif;font-size:32px;font-weight:bold;color:#000;position:absolute;left:8px;top:21px;line-height:37px;white-space:pre">It works better now</h1></div>
  <div class="edge abs"></div>
</div>
</body>
</html>
